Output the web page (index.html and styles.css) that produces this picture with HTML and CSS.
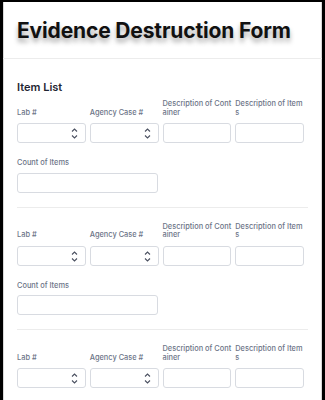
FILE: index.html
```html
<!DOCTYPE html>
<html lang="en">
<head>
  <meta charset="UTF-8" />
  <meta name="viewport" content="width=device-width, initial-scale=1.0"/>
  <title>Evidence Destruction Form</title>
  <link rel="stylesheet" href="styles.css">
</head>
<body>
  <div class="page">
    <header class="form-header">
      <h1>Evidence Destruction Form</h1>
    </header>

    <main class="form-body">
      <h2 class="section-title">Item List</h2>

      <section class="item-block">
        <div class="item-row">
          <div class="field">
            <label>Lab #</label>
            <div class="input spinner"><span class="arrows"><svg width="7" height="11" viewBox="0 0 7 11"><path d="M1 3.5L3.5 1L6 3.5M1 7.5L3.5 10L6 7.5" fill="none" stroke="#4a5060" stroke-width="1.1"/></svg></span></div>
          </div>
          <div class="field">
            <label>Agency Case #</label>
            <div class="input spinner"><span class="arrows"><svg width="7" height="11" viewBox="0 0 7 11"><path d="M1 3.5L3.5 1L6 3.5M1 7.5L3.5 10L6 7.5" fill="none" stroke="#4a5060" stroke-width="1.1"/></svg></span></div>
          </div>
          <div class="field">
            <label>Description of Container</label>
            <div class="input"></div>
          </div>
          <div class="field">
            <label>Description of Items</label>
            <div class="input"></div>
          </div>
        </div>
        <div class="field count-field">
          <label>Count of Items</label>
          <div class="input"></div>
        </div>
      </section>

      <section class="item-block">
        <div class="item-row">
          <div class="field">
            <label>Lab #</label>
            <div class="input spinner"><span class="arrows"><svg width="7" height="11" viewBox="0 0 7 11"><path d="M1 3.5L3.5 1L6 3.5M1 7.5L3.5 10L6 7.5" fill="none" stroke="#4a5060" stroke-width="1.1"/></svg></span></div>
          </div>
          <div class="field">
            <label>Agency Case #</label>
            <div class="input spinner"><span class="arrows"><svg width="7" height="11" viewBox="0 0 7 11"><path d="M1 3.5L3.5 1L6 3.5M1 7.5L3.5 10L6 7.5" fill="none" stroke="#4a5060" stroke-width="1.1"/></svg></span></div>
          </div>
          <div class="field">
            <label>Description of Container</label>
            <div class="input"></div>
          </div>
          <div class="field">
            <label>Description of Items</label>
            <div class="input"></div>
          </div>
        </div>
        <div class="field count-field">
          <label>Count of Items</label>
          <div class="input"></div>
        </div>
      </section>

      <section class="item-block">
        <div class="item-row">
          <div class="field">
            <label>Lab #</label>
            <div class="input spinner"><span class="arrows"><svg width="7" height="11" viewBox="0 0 7 11"><path d="M1 3.5L3.5 1L6 3.5M1 7.5L3.5 10L6 7.5" fill="none" stroke="#4a5060" stroke-width="1.1"/></svg></span></div>
          </div>
          <div class="field">
            <label>Agency Case #</label>
            <div class="input spinner"><span class="arrows"><svg width="7" height="11" viewBox="0 0 7 11"><path d="M1 3.5L3.5 1L6 3.5M1 7.5L3.5 10L6 7.5" fill="none" stroke="#4a5060" stroke-width="1.1"/></svg></span></div>
          </div>
          <div class="field">
            <label>Description of Container</label>
            <div class="input"></div>
          </div>
          <div class="field">
            <label>Description of Items</label>
            <div class="input"></div>
          </div>
        </div>
        <div class="field count-field">
          <label>Count of Items</label>
          <div class="input"></div>
        </div>
      </section>
    </main>
  </div>
</body>
</html>
```

FILE: styles.css
```css
* {
    margin: 0;
    padding: 0;
    box-sizing: border-box;
}
html, body {
    height: 100%;
}
body {
    font-family: 'Inter', 'Noto Sans', sans-serif;
    background-color: #000;
    color: #2c3345;
    overflow: hidden;
}
.page {
    min-height: 100%;
    margin: 2px 3px 0 3px;
    background: #fff;
    box-shadow: inset 1px 0 0 #d9d9d9, inset -1px 0 0 #d9d9d9;
}
.form-header {
    height: 57px;
    display: flex;
    align-items: center;
    padding-left: 14px;
    border-bottom: 1px solid #ececec;
}
.form-header h1 {
    font-size: 21px;
    font-weight: 700;
    color: #111;
    letter-spacing: -0.15px;
    text-shadow: 0 4px 5px rgba(0, 0, 0, 0.35);
}
.form-body {
    padding: 21px 14px 0 14px;
}
.section-title {
    font-size: 11px;
    font-weight: 600;
    color: #1f2533;
    line-height: 14px;
    margin-bottom: 6px;
}
.item-block {
    padding-bottom: 14px;
    border-bottom: 1px solid #ececec;
    margin-bottom: 15px;
}
.item-row {
    display: grid;
    grid-template-columns: repeat(4, 1fr);
    column-gap: 4px;
    width: 287px;
    align-items: end;
}
.field label {
    display: block;
    font-size: 7.4px;
    line-height: 8.5px;
    font-weight: 500;
    color: #6c7487;
    word-break: break-all;
    margin-bottom: 6px;
}
.input {
    height: 20px;
    border: 1px solid #d8dbe1;
    border-radius: 3px;
    background: #fff;
    position: relative;
}
.spinner .arrows {
    position: absolute;
    right: 7px;
    top: 4px;
    display: flex;
}
.count-field {
    margin-top: 16px;
    width: 141px;
}
.count-field label {
    margin-bottom: 5px;
}
```
